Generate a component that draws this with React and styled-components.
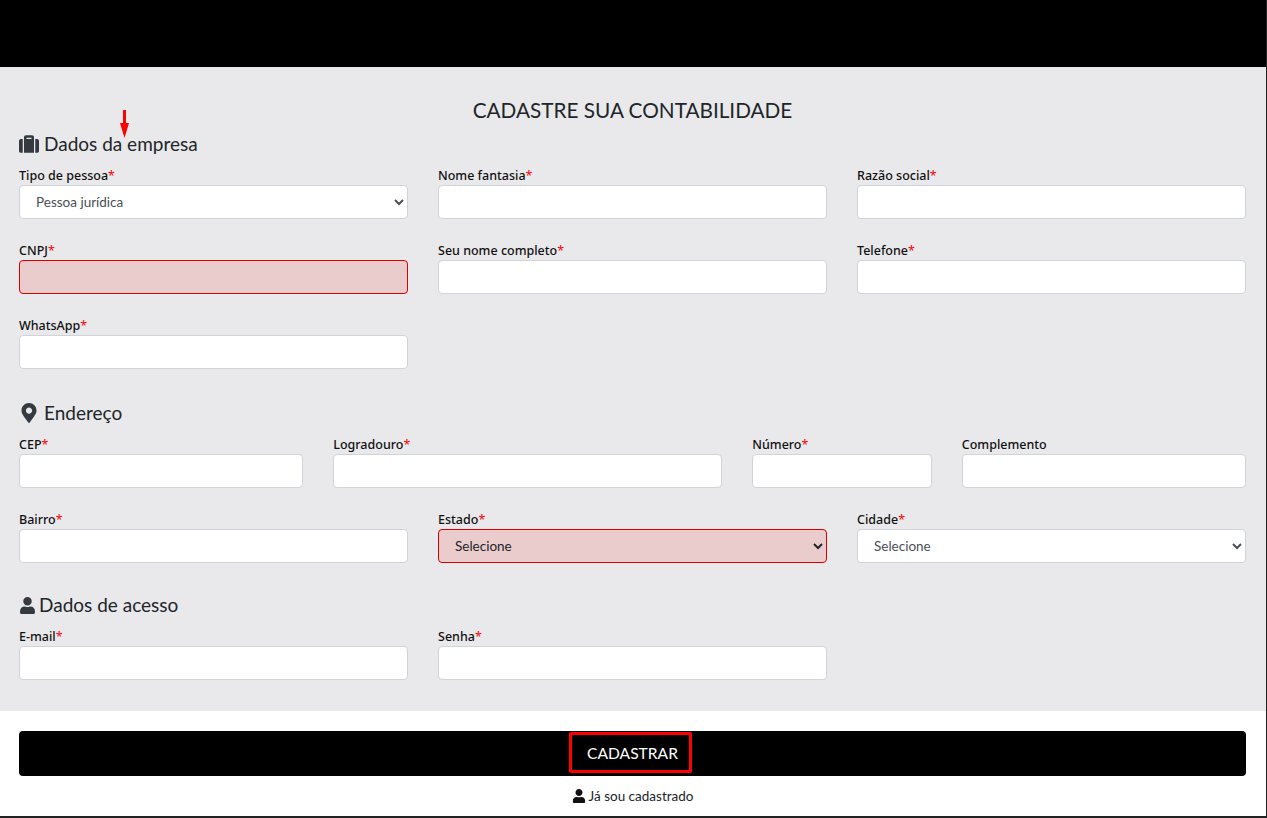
import React from "react";
import styled, { createGlobalStyle } from "styled-components";
import { FaMapMarkerAlt, FaSuitcase, FaUser } from "react-icons/fa";

const GlobalStyle = createGlobalStyle`
  html, body {
    margin: 0;
    padding: 0;
    background: #fff;
  }

  body {
    color: #212529;
    font-family: Lato, "Noto Sans", sans-serif;
  }
`;

const Page = styled.div`
  border-bottom: 2px solid #222;
  border-right: 1px solid #222;
  box-sizing: border-box;
  height: 818px;
  overflow: hidden;
`;

const TopBar = styled.div`
  background: #000;
  height: 67px;
`;

const FormArea = styled.div`
  background: #e9e9eb;
  box-sizing: border-box;
  height: 644px;
  padding: 29px 20px 0 19px;
`;

const Title = styled.h2`
  font-size: 20.750px;
  font-weight: 400;
  line-height: 28px;
  margin: 0;
  text-align: center;
`;

const SectionTitle = styled.h3`
  align-items: center;
  display: flex;
  font-size: 19px;
  font-weight: 400;
  gap: ${(props) => props.$gap || 4}px;
  height: 28px;
  line-height: 28px;
  margin: ${(props) => props.$top || 0}px 0 ${(props) => props.$bottom || 0}px;
  position: relative;

  svg {
    color: #343a40;
    flex: none;
  }
`;

const Arrow = styled.svg`
  left: 101px;
  position: absolute;
  top: -20px;
`;

const Grid = styled.div`
  display: grid;
  gap: 0 30px;
  grid-template-columns: repeat(12, minmax(0, 1fr));
`;

const Field = styled.div`
  grid-column: span ${(props) => props.$span};
  height: 75px;
`;

const Label = styled.label`
  color: #111;
  display: block;
  font-family: "Noto Sans", sans-serif;
  font-size: 12.500px;
  font-weight: 500;
  height: 18px;
  line-height: 18px;
`;

const Star = styled.span`
  color: #f00;
  font-weight: 400;
`;

const Input = styled.input`
  background: ${(props) => (props.$invalid ? "#ebcccd" : "#fff")};
  border: 1px solid ${(props) => (props.$invalid ? "#d90000" : "#ced4da")};
  border-radius: 4px;
  box-sizing: border-box;
  display: block;
  height: 34px;
  outline: none;
  width: 100%;
`;

const Select = styled.select`
  background: ${(props) => (props.$invalid ? "#ebcccd" : "#fff")};
  border: 1px solid ${(props) => (props.$invalid ? "#d90000" : "#ced4da")};
  border-radius: 4px;
  box-sizing: border-box;
  color: ${(props) => (props.$invalid ? "#212529" : "#495057")};
  display: block;
  font-family: inherit;
  font-size: 13.500px;
  height: 34px;
  outline: none;
  padding: 0 0 0 12px;
  width: 100%;
`;

const Footer = styled.div`
  padding: 20px 20px 0 19px;
`;

const SubmitButton = styled.button`
  align-items: center;
  background: #000;
  border: 0;
  border-radius: 4px;
  color: #fff;
  display: flex;
  font-family: inherit;
  font-size: 15.600px;
  height: 45px;
  justify-content: center;
  padding: 0;
  width: 100%;
`;

const Highlight = styled.span`
  align-items: center;
  border: 3px solid #f00;
  border-radius: 2px;
  box-sizing: border-box;
  display: flex;
  height: 41px;
  justify-content: center;
  margin: 0 5px 2px 0;
  padding-left: 5px;
  width: 123px;
`;

const LoginLink = styled.a`
  align-items: center;
  color: #212529;
  display: flex;
  font-size: 13.500px;
  gap: 3px;
  height: 18px;
  justify-content: center;
  margin-top: 11px;

  svg {
    color: #111;
  }
`;

const FormField = ({ label, span = 4, invalid, options }) => (
  <Field $span={span}>
    <Label>
      {label}
      {!label.startsWith("Complemento") && <Star>*</Star>}
    </Label>
    {options ? (
      <Select $invalid={invalid} defaultValue={options[0]}>
        {options.map((option) => (
          <option key={option}>{option}</option>
        ))}
      </Select>
    ) : (
      <Input $invalid={invalid} />
    )}
  </Field>
);

const App = () => (
  <Page>
    <GlobalStyle />
    <TopBar />
    <FormArea>
      <Title>CADASTRE SUA CONTABILIDADE</Title>
      <SectionTitle $top={6} $bottom={9} $gap={5}>
        <FaSuitcase size={20} />
        Dados da empresa
        <Arrow width="9" height="28" viewBox="0 0 9 28">
          <path d="M3 0h3v13h3L4.500 28 0 13h3z" fill="#f00" />
        </Arrow>
      </SectionTitle>
      <Grid>
        <FormField label="Tipo de pessoa" options={["Pessoa jurídica"]} />
        <FormField label="Nome fantasia" />
        <FormField label="Razão social" />
        <FormField label="CNPJ" invalid />
        <FormField label="Seu nome completo" />
        <FormField label="Telefone" />
        <FormField label="WhatsApp" />
      </Grid>
      <SectionTitle $top={7} $bottom={9} $gap={5}>
        <FaMapMarkerAlt size={20} />
        Endereço
      </SectionTitle>
      <Grid>
        <FormField label="CEP" span={3} />
        <FormField label="Logradouro" span={4} />
        <FormField label="Número" span={2} />
        <FormField label="Complemento" span={3} />
        <FormField label="Bairro" />
        <FormField label="Estado" invalid options={["Selecione"]} />
        <FormField label="Cidade" options={["Selecione"]} />
      </Grid>
      <SectionTitle $top={5} $bottom={9} $gap={3}>
        <FaUser size={17} />
        Dados de acesso
      </SectionTitle>
      <Grid>
        <FormField label="E-mail" />
        <FormField label="Senha" />
      </Grid>
    </FormArea>
    <Footer>
      <SubmitButton>
        <Highlight>CADASTRAR</Highlight>
      </SubmitButton>
      <LoginLink>
        <FaUser size={14} />
        Já sou cadastrado
      </LoginLink>
    </Footer>
  </Page>
);

export default App;
